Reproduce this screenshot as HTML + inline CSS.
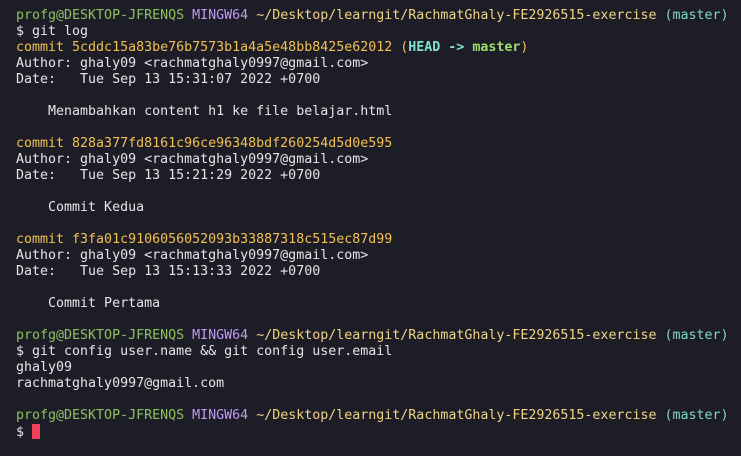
<!DOCTYPE html><html><head><style>
html,body{margin:0;padding:0;background:#1c1d27;width:741px;height:456px;overflow:hidden}
pre{margin:0;padding:8px 0 0 16px;font-family:"DejaVu Sans Mono","Liberation Mono",monospace;font-size:13.3px;line-height:16px;color:#e6e6e6;white-space:pre}
.g{color:#8ec25e}.p{color:#c39af0}.y{color:#f1d384}.c{color:#7fd6c2}.o{color:#f2c052}
.hc{color:#7fe0d0;font-weight:bold}.hg{color:#9edc6a;font-weight:bold}
.cur{display:inline-block;width:8px;height:15px;background:#f0405a;vertical-align:-3px}
</style></head><body><pre><span class="g">profg@DESKTOP-JFRENQS</span> <span class="p">MINGW64</span> <span class="y">~/Desktop/learngit/RachmatGhaly-FE2926515-exercise</span> <span class="c">(master)</span>
$ git log
<span class="o">commit 5cddc15a83be76b7573b1a4a5e48bb8425e62012 (</span><span class="hc">HEAD -&gt; </span><span class="hg">master</span><span class="o">)</span>
Author: ghaly09 &lt;rachmatghaly0997@gmail.com&gt;
Date:   Tue Sep 13 15:31:07 2022 +0700

    Menambahkan content h1 ke file belajar.html

<span class="o">commit 828a377fd8161c96ce96348bdf260254d5d0e595</span>
Author: ghaly09 &lt;rachmatghaly0997@gmail.com&gt;
Date:   Tue Sep 13 15:21:29 2022 +0700

    Commit Kedua

<span class="o">commit f3fa01c9106056052093b33887318c515ec87d99</span>
Author: ghaly09 &lt;rachmatghaly0997@gmail.com&gt;
Date:   Tue Sep 13 15:13:33 2022 +0700

    Commit Pertama

<span class="g">profg@DESKTOP-JFRENQS</span> <span class="p">MINGW64</span> <span class="y">~/Desktop/learngit/RachmatGhaly-FE2926515-exercise</span> <span class="c">(master)</span>
$ git config user.name &amp;&amp; git config user.email
ghaly09
rachmatghaly0997@gmail.com

<span class="g">profg@DESKTOP-JFRENQS</span> <span class="p">MINGW64</span> <span class="y">~/Desktop/learngit/RachmatGhaly-FE2926515-exercise</span> <span class="c">(master)</span>
$ <span class="cur"></span></pre></body></html>
